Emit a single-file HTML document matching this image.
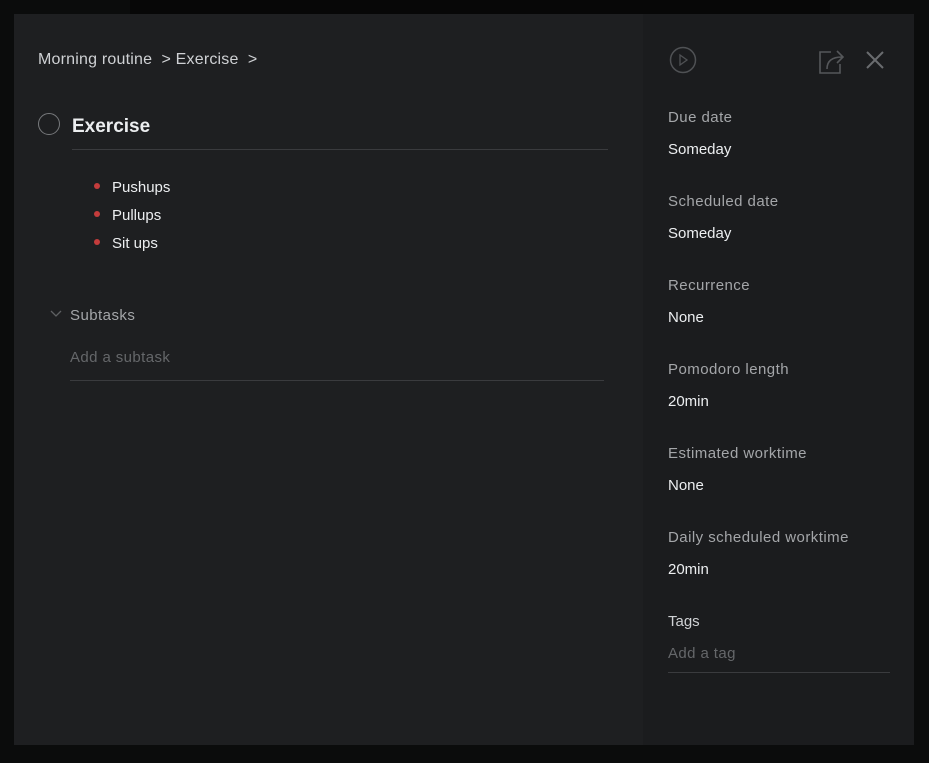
<!DOCTYPE html>
<html><head><style>
*{margin:0;padding:0;box-sizing:border-box}
body{width:929px;height:763px;background:#0b0c0c;font-family:"Liberation Sans",sans-serif;position:relative;overflow:hidden}
.topbar{position:absolute;left:130px;top:0;width:700px;height:14px;background:#070707}
.panel{position:absolute;left:14px;top:14px;width:900px;height:731px;background:#1e1f21}
.right{position:absolute;left:629px;top:0;width:271px;height:731px;background:#1b1c1e}
.t{position:absolute;white-space:nowrap}
.lbl{color:#a4a6a9;font-size:15px;letter-spacing:0.45px}
.val{color:#eceef0;font-size:15px}
</style></head><body>
<div class="topbar"></div>
<div class="panel">
 <div class="t" style="left:24px;top:37px;color:#cfd1d4;font-size:16px;letter-spacing:0.2px">Morning routine&nbsp; &gt; Exercise&nbsp; &gt;</div>
 <div style="position:absolute;left:24px;top:99px;width:22px;height:22px;border:1.5px solid #77797c;border-radius:50%"></div>
 <div class="t" style="left:58px;top:102px;color:#eceef0;font-size:19px;font-weight:bold">Exercise</div>
 <div style="position:absolute;left:58px;top:135px;width:536px;height:1px;background:#3a3b3e"></div>
 <div style="position:absolute;left:80px;top:169px;width:6px;height:6px;border-radius:50%;background:#c43c3c"></div>
 <div style="position:absolute;left:80px;top:197px;width:6px;height:6px;border-radius:50%;background:#c43c3c"></div>
 <div style="position:absolute;left:80px;top:225px;width:6px;height:6px;border-radius:50%;background:#c43c3c"></div>
 <div class="t val" style="left:98px;top:165px">Pushups</div>
 <div class="t val" style="left:98px;top:193px">Pullups</div>
 <div class="t val" style="left:98px;top:221px">Sit ups</div>
 <svg style="position:absolute;left:36px;top:295px" width="12" height="10"><path d="M1 2l5 5 5-5" stroke="#5e6063" stroke-width="1.3" fill="none"/></svg>
 <div class="t lbl" style="left:56px;top:293px">Subtasks</div>
 <div class="t" style="left:56px;top:335px;color:#65676a;font-size:15px;letter-spacing:0.4px">Add a subtask</div>
 <div style="position:absolute;left:56px;top:366px;width:534px;height:1px;background:#3a3b3e"></div>
 <div class="right">
  <svg style="position:absolute;left:26px;top:32px" width="28" height="28"><circle cx="14" cy="14" r="12.5" stroke="#4f5154" stroke-width="1.5" fill="none"/><path d="M11 9v10l7-5z" stroke="#4f5154" stroke-width="1.3" fill="none"/></svg>
  <svg style="position:absolute;left:175px;top:32px" width="30" height="28"><path d="M13 6H2v21h20v-9" stroke="#55575a" stroke-width="1.6" fill="none"/><path d="M9 23c0-8 5-12 15-12M19 5l6 6-6 6" stroke="#55575a" stroke-width="1.6" fill="none"/></svg>
  <svg style="position:absolute;left:222px;top:36px" width="20" height="20"><path d="M2 2l16 16M18 2L2 18" stroke="#6a6c6f" stroke-width="2" fill="none"/></svg>
  <div class="t lbl" style="left:25px;top:95px">Due date</div>
  <div class="t val" style="left:25px;top:127px">Someday</div>
  <div class="t lbl" style="left:25px;top:179px">Scheduled date</div>
  <div class="t val" style="left:25px;top:211px">Someday</div>
  <div class="t lbl" style="left:25px;top:263px">Recurrence</div>
  <div class="t val" style="left:25px;top:295px">None</div>
  <div class="t lbl" style="left:25px;top:347px">Pomodoro length</div>
  <div class="t val" style="left:25px;top:379px">20min</div>
  <div class="t lbl" style="left:25px;top:431px">Estimated worktime</div>
  <div class="t val" style="left:25px;top:463px">None</div>
  <div class="t lbl" style="left:25px;top:515px">Daily scheduled worktime</div>
  <div class="t val" style="left:25px;top:547px">20min</div>
  <div class="t" style="left:25px;top:599px;color:#cfd1d4;font-size:15px">Tags</div>
  <div class="t" style="left:25px;top:631px;color:#65676a;font-size:15px;letter-spacing:0.4px">Add a tag</div>
  <div style="position:absolute;left:25px;top:658px;width:222px;height:1px;background:#3a3b3e"></div>
 </div>
</div>
</body></html>
